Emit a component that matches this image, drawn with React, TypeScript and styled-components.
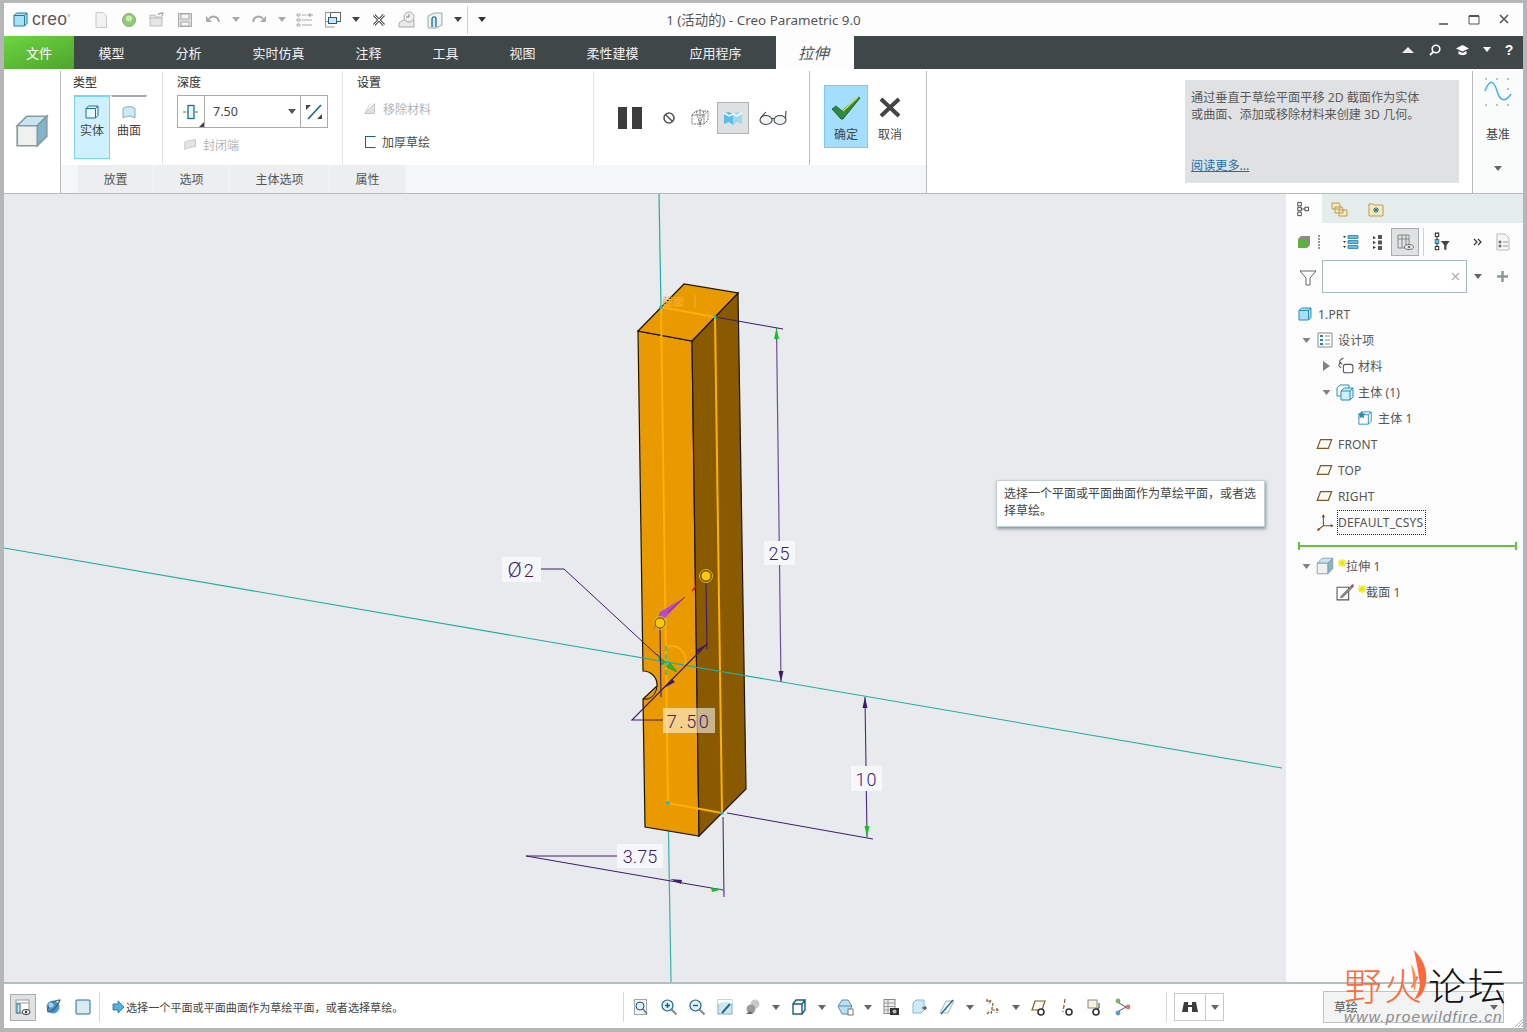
import React from 'react';
import styled, { createGlobalStyle } from 'styled-components';

const GlobalStyle = createGlobalStyle`
  html, body {
    margin: 0;
    padding: 0;
    background: #b4b6b7;
  }
  * {
    box-sizing: border-box;
  }
`;

const Frame = styled.div`
  width: 1527px;
  height: 1032px;
  padding: 3px 4px 4px;
  display: flex;
  flex-direction: column;
  overflow: hidden;
  position: relative;
  background: #b4b6b7;
  font-family: "Noto Sans", "Noto Sans CJK SC", sans-serif;
  font-size: 12px;
  color: #555;
`;

/* title bar */
const TitleBar = styled.div`
  height: 33px;
  flex: none;
  background: #fdfdfd;
  display: grid;
  grid-template-columns: 1fr auto 1fr;
  align-items: center;
`;

const TitleLeft = styled.div`
  display: flex;
  align-items: center;
  padding-left: 9px;
`;

const Brand = styled.span`
  font-family: "Liberation Sans", sans-serif;
  font-size: 17.5px;
  color: #5a5a5a;
  margin-left: 4px;
  width: 52px;
  letter-spacing: 0.3px;
`;

const BrandMark = styled.span`
  font-size: 8px;
  vertical-align: 5px;
`;

const IconRow = styled.div`
  display: flex;
  align-items: center;
  gap: 10px;
  margin-left: 8px;
`;

const QuickDivider = styled.div`
  width: 1px;
  height: 28px;
  background: #cfcfcf;
  margin: 0 -1px 0 -5px;
`;

const WindowTitle = styled.div`
  font-size: 13.4px;
  color: #555;
  padding-bottom: 2px;
`;

const WindowButtons = styled.div`
  display: flex;
  justify-content: flex-end;
  align-items: center;
  gap: 16px;
  padding-right: 12px;
`;

/* ribbon tabs */
const TabBar = styled.div`
  height: 33px;
  flex: none;
  background: #3f4749;
  display: flex;
  align-items: stretch;
`;

const FileTab = styled.div`
  width: 70px;
  margin-right: -1px;
  background: linear-gradient(160deg, #6cd640, #4fa32d);
  color: #fff;
  font-size: 13px;
  display: flex;
  align-items: center;
  justify-content: center;
`;

const Tab = styled.div`
  padding: 0 25.5px;
  color: #f2f2f2;
  font-size: 13px;
  display: flex;
  align-items: center;
`;

const ActiveTab = styled.div`
  width: 78px;
  margin-left: 9px;
  padding-right: 3px;
  background: #fdfdfd;
  color: #555;
  font-size: 15.5px;
  font-style: italic;
  display: flex;
  align-items: center;
  justify-content: center;
`;

const TabTools = styled.div`
  margin-left: auto;
  display: flex;
  align-items: center;
  gap: 13px;
  padding: 0 9px 6px 0;
`;

/* ribbon */
const Ribbon = styled.div`
  height: 125px;
  flex: none;
  background: #fff;
  border-bottom: 1px solid #b5babb;
  display: flex;
`;

const FeatureIcon = styled.div`
  width: 56px;
  display: flex;
  justify-content: center;
  padding: 43px 0 0 0;
`;

const RibbonBody = styled.div`
  width: 867px;
  margin-top: 2px;
  border-left: 1px solid #b9bcbe;
  border-right: 1px solid #b9bcbe;
  display: flex;
  flex-direction: column;
`;

const Groups = styled.div`
  height: 94px;
  display: flex;
`;

const Group = styled.div<{ $w: number; $pad: number; $strong?: boolean }>`
  width: ${(p) => p.$w}px;
  flex: none;
  padding: 4px 0 0 ${(p) => p.$pad}px;
  border-right: 1px solid ${(p) => (p.$strong ? '#b9bcbe' : '#e3e5e6')};
`;

const GroupTitle = styled.div<{ $ml?: number }>`
  height: 16px;
  line-height: 16px;
  font-weight: 500;
  color: #4a4a4a;
  margin-bottom: 4px;
  margin-left: ${(p) => p.$ml ?? 0}px;
`;

const TypeRow = styled.div`
  display: flex;
  gap: 1px;
`;

const TypeButton = styled.div<{ $on?: boolean }>`
  width: 36px;
  height: 64px;
  display: flex;
  flex-direction: column;
  align-items: center;
  padding-top: 8px;
  gap: 2px;
  background: ${(p) => (p.$on ? '#cff0fd' : 'transparent')};
  border: 1px solid ${(p) => (p.$on ? '#7cd3f8' : 'transparent')};
  border-top: 2px solid ${(p) => (p.$on ? '#7cd3f8' : '#a8a8a8')};
  color: #444;
`;

const DepthField = styled.div`
  width: 151px;
  height: 33px;
  border: 1px solid #aaa;
  display: flex;
  align-items: stretch;
`;

const DepthIcon = styled.div`
  width: 27px;
  position: relative;
  border-right: 1px solid #aaa;
  display: flex;
  align-items: center;
  justify-content: center;

  &::after {
    content: '';
    position: absolute;
    right: 0;
    bottom: 0;
    border-style: solid;
    border-width: 0 0 5px 5px;
    border-color: transparent transparent #444 transparent;
  }
`;

const DepthValue = styled.div`
  flex: 1;
  display: flex;
  align-items: center;
  justify-content: space-between;
  padding: 0 4px 0 8px;
  font-size: 12.5px;
  color: #444;
`;

const DepthFlip = styled.div`
  width: 27px;
  border-left: 1px solid #aaa;
  display: flex;
  align-items: center;
  justify-content: center;
`;

const DisabledOption = styled.div<{ $left: number; $top: number }>`
  display: flex;
  align-items: center;
  gap: 4px;
  color: #b4b4b4;
  margin: ${(p) => p.$top}px 0 0 ${(p) => p.$left}px;
`;

const ThickenRow = styled.div`
  display: flex;
  align-items: center;
  gap: 6px;
  color: #4a4a4a;
  margin: 15px 0 0 8px;
`;

const ThickenBox = styled.span`
  width: 11px;
  height: 12px;
  border: 1px solid #1d5f80;
  border-right-color: transparent;
`;

const ControlGroup = styled.div`
  width: 216px;
  flex: none;
  display: flex;
  align-items: center;
  padding-left: 24px;
  border-right: 1px solid #b9bcbe;
`;

const Control = styled.div<{ $ml: number }>`
  margin-left: ${(p) => p.$ml}px;
  display: flex;
`;

const ToggleControl = styled.div`
  width: 32px;
  height: 32px;
  margin-left: 7px;
  background: #dfe0e2;
  border: 1px solid #b0b0b0;
  display: flex;
  align-items: center;
  justify-content: center;
`;

const ConfirmGroup = styled.div`
  flex: 1;
  display: flex;
  padding: 14px 0 0 14px;
`;

const ConfirmButton = styled.div<{ $primary?: boolean }>`
  width: 44px;
  height: 63px;
  display: flex;
  flex-direction: column;
  align-items: center;
  padding-top: 10px;
  gap: 5px;
  color: #444;
  background: ${(p) => (p.$primary ? '#a3defd' : 'transparent')};
  border: 1px solid ${(p) => (p.$primary ? '#7cc9f6' : 'transparent')};
`;

const SubTabs = styled.div`
  height: 28px;
  background: #f5f6f8;
  display: flex;
  gap: 1px;
  padding-left: 17px;
`;

const SubTab = styled.div<{ $w: number }>`
  width: ${(p) => p.$w}px;
  background: #eceef0;
  color: #555;
  display: flex;
  align-items: center;
  justify-content: center;
`;

const HelpArea = styled.div`
  flex: 1;
  display: flex;
  justify-content: flex-end;
  padding: 11px 13px 0 0;
`;

const HelpBox = styled.div`
  width: 274px;
  height: 103px;
  background: #e0e1e3;
  padding: 9px 6px 9px 6px;
  font-size: 12.15px;
  line-height: 17px;
  color: #5a5a5a;
  display: flex;
  flex-direction: column;
  justify-content: space-between;
`;

const HelpLink = styled.span`
  color: #1b6fae;
  text-decoration: underline;
`;

const Datum = styled.div`
  width: 51px;
  flex: none;
  margin-top: 2px;
  background: #fafbfb;
  border-left: 1px solid #b9bcbe;
  display: flex;
  flex-direction: column;
  align-items: center;
  padding-top: 7px;
  color: #444;
`;

const DatumLabel = styled.div`
  margin: 17px 0 23px;
`;

/* main area */
const Main = styled.div`
  height: 788px;
  flex: none;
  display: flex;
`;

const Viewport = styled.div`
  width: 1282px;
  flex: none;
  position: relative;
  background: #e8eaed;
`;

const Scene = styled.svg`
  display: block;
`;

const Tooltip = styled.div`
  position: absolute;
  left: 992px;
  top: 286px;
  width: 269px;
  height: 47px;
  padding: 4px 7px;
  background: #fff;
  border: 1px solid #c3d0d4;
  box-shadow: 1px 2px 3px rgba(60, 80, 90, 0.55);
  font-size: 12px;
  line-height: 17px;
  white-space: nowrap;
  color: #444;
`;

const Panel = styled.div`
  flex: 1;
  background: #fcfcfc;
  display: flex;
  flex-direction: column;
`;

const PanelTabs = styled.div`
  height: 29px;
  flex: none;
  background: #e5ecec;
  display: flex;
`;

const PanelTab = styled.div<{ $on?: boolean }>`
  width: 36px;
  background: ${(p) => (p.$on ? '#fdfdfd' : 'transparent')};
  display: flex;
  align-items: center;
  justify-content: center;
`;

const PanelTools = styled.div`
  height: 28px;
  margin-top: 5px;
  padding-left: 8px;
  display: flex;
  flex: none;
`;

const PanelSlot = styled.div<{ $w: number; $on?: boolean }>`
  width: ${(p) => p.$w}px;
  flex: none;
  display: flex;
  align-items: center;
  justify-content: center;
  background: ${(p) => (p.$on ? '#dfe1e2' : 'transparent')};
  border: ${(p) => (p.$on ? '1px solid #a9adaf' : 'none')};
`;

const PanelDivider = styled.div`
  width: 1px;
  background: #ccd0d2;
  margin: 0 3px 0 4px;
`;

const SearchRow = styled.div`
  height: 31px;
  margin-top: 5px;
  flex: none;
  display: flex;
  align-items: center;
`;

const SearchFunnel = styled.div`
  width: 36px;
  display: flex;
  justify-content: center;
  padding-left: 8px;
`;

const SearchInput = styled.div`
  width: 145px;
  height: 33px;
  border: 1px solid #a9b8bc;
  background: #fff;
  display: flex;
  align-items: center;
  justify-content: flex-end;
  padding-right: 6px;
`;

const SearchTools = styled.div`
  display: flex;
  align-items: center;
  gap: 15px;
  margin-left: 7px;
`;

const Tree = styled.div`
  margin-top: 9px;
  display: flex;
  flex-direction: column;
  letter-spacing: 0.15px;
`;

const Row = styled.div<{ $pad: number }>`
  height: 26px;
  flex: none;
  padding-left: ${(p) => p.$pad}px;
  display: flex;
  align-items: center;
  color: #555;
`;

const Arrow = styled.span`
  width: 16px;
  flex: none;
  display: flex;
  justify-content: center;
`;

const RowIcon = styled.span`
  width: 22px;
  flex: none;
  margin-right: 2px;
  display: flex;
  justify-content: center;
`;

const Star = styled.span`
  display: flex;
  width: 8px;
  margin-bottom: 7px;
  flex: none;
`;

const RowLabel = styled.span<{ $focus?: boolean }>`
  outline: ${(p) => (p.$focus ? '1px dotted #222' : 'none')};
  line-height: ${(p) => (p.$focus ? '23px' : 'normal')};
  padding-right: ${(p) => (p.$focus ? '2px' : '0')};
`;

const InsertLine = styled.div`
  height: 2px;
  width: 219px;
  margin: 10px 0 6px 12px;
  flex: none;
  background: #66c23c;
  position: relative;

  &::before,
  &::after {
    content: '';
    position: absolute;
    top: -3px;
    width: 2px;
    height: 8px;
    background: #66c23c;
  }
  &::before {
    left: 0;
  }
  &::after {
    right: 0;
  }
`;

/* status bar */
const StatusBar = styled.div`
  height: 46px;
  flex: none;
  background: #fff;
  border-top: 2px solid #b3c0c0;
  display: flex;
  align-items: center;
  padding: 2px 0 0 6px;
`;

const StatusButton = styled.div<{ $on?: boolean; $w: number }>`
  width: ${(p) => p.$w}px;
  height: 27px;
  flex: none;
  display: flex;
  align-items: center;
  justify-content: center;
  background: ${(p) => (p.$on ? '#dfe1e2' : 'transparent')};
  border: ${(p) => (p.$on ? '1px solid #a9adaf' : 'none')};
`;

const StatusDivider = styled.div<{ $ml?: number }>`
  width: 1px;
  height: 30px;
  flex: none;
  margin-left: ${(p) => p.$ml ?? 0}px;
  background: #d4d8d9;
`;

const Message = styled.div`
  width: 523px;
  flex: none;
  display: flex;
  align-items: center;
  gap: 1px;
  padding-left: 12px;
  font-size: 11.1px;
  color: #444;
`;

const StatusTools = styled(IconRow)`
  margin-left: 8px;
  width: 534px;
  flex: none;
`;

const FindBox = styled.div`
  width: 50px;
  height: 28px;
  flex: none;
  margin-left: 7px;
  border: 1px solid #c5c9cb;
  display: flex;
  align-items: center;
`;

const FindIcon = styled.div`
  width: 31px;
  height: 100%;
  border-right: 1px solid #c5c9cb;
  display: flex;
  align-items: center;
  justify-content: center;
`;

const FindCaret = styled.div`
  flex: 1;
  display: flex;
  justify-content: center;
`;

const Selector = styled.div`
  width: 181px;
  height: 32px;
  flex: none;
  margin-left: 99px;
  background: #f2f3f3;
  border: 1px solid #bfc3c5;
  display: flex;
  align-items: center;
  justify-content: space-between;
  padding: 0 5px 0 10px;
`;

const Grip = styled.svg`
  flex: none;
  align-self: flex-end;
  margin: 0 0 1px 11px;
`;

const Watermark = styled.div`
  position: absolute;
  left: 1344px;
  top: 962px;
  width: 175px;
  pointer-events: none;
`;

const WatermarkTitle = styled.div`
  display: flex;
  font-size: 38px;
  line-height: 46px;
  font-weight: 300;
  letter-spacing: 2px;
  color: #111;
`;

const WatermarkHot = styled.span`
  color: #ff6a3c;
  width: 84px;
`;

const WatermarkUrl = styled.div`
  font-family: "Liberation Sans", sans-serif;
  font-style: italic;
  font-size: 15.5px;
  letter-spacing: 1.15px;
  color: #8a8a8a;
  white-space: nowrap;
`;

const Flame = styled.svg`
  position: absolute;
  left: 62px;
  top: -15px;
`;

const Caret = ({ color = '#666', w = 8 }: { color?: string; w?: number }) => (
  <svg width={w} height="5" viewBox="0 0 8 5">
    <path d="M0 0h8L4 5z" fill={color} />
  </svg>
);

const Ico = ({ s = 18, children }: { s?: number; children: React.ReactNode }) => (
  <svg width={s} height={s} viewBox="0 0 18 18" fill="none">
    {children}
  </svg>
);

const Cube = ({ s = 18, front = '#f0f0f0', side = '#7fb6cc', top = '#c4e6f3', line = '#8a9aa0' }: { s?: number; front?: string; side?: string; top?: string; line?: string }) => (
  <Ico s={s}>
    <path d="M2 6.5 6.5 2H16L11.5 6.5z" fill={top} stroke={line} strokeWidth=".8" />
    <path d="M11.5 6.5 16 2v9.5L11.5 16z" fill={side} stroke={line} strokeWidth=".8" />
    <path d="M2 6.5h9.5V16H2z" fill={front} stroke={line} strokeWidth=".8" />
  </Ico>
);

const PlaneIcon = () => (
  <Ico s={20}>
    <path d="M2 13 5 5h10l-3 8z" fill="#fbfaf3" stroke="#7a5c2c" strokeWidth="1.1" />
  </Ico>
);

const ToolIcons: Record<string, React.ReactNode> = {
  fit: (
    <Ico>
      <rect x="2.5" y="1.5" width="12" height="15" fill="#f3f6f7" stroke="#9aa" />
      <circle cx="8" cy="8" r="4" fill="#dff1fa" stroke="#346" />
      <path d="m11 11 4 5" stroke="#777" strokeWidth="1.6" />
    </Ico>
  ),
  zoomIn: (
    <Ico>
      <circle cx="7.5" cy="7.5" r="5.5" fill="#dff1fa" stroke="#17607f" strokeWidth="1.2" />
      <path d="M5 7.5h5M7.5 5v5" stroke="#17607f" strokeWidth="1.4" />
      <path d="m11.5 11.5 5 5" stroke="#888" strokeWidth="2" />
    </Ico>
  ),
  zoomOut: (
    <Ico>
      <circle cx="7.5" cy="7.5" r="5.5" fill="#dff1fa" stroke="#17607f" strokeWidth="1.2" />
      <path d="M5 7.5h5" stroke="#17607f" strokeWidth="1.4" />
      <path d="m11.5 11.5 5 5" stroke="#888" strokeWidth="2" />
    </Ico>
  ),
  repaint: (
    <Ico>
      <rect x="2" y="2" width="14" height="14" fill="#cfe6f0" stroke="#8ab" />
      <path d="M6 15 14 6" stroke="#1b6d92" strokeWidth="2" />
      <path d="M2 2h14v4C11 3 6 4 2 6z" fill="#fff" />
    </Ico>
  ),
  shade: (
    <Ico>
      <circle cx="11" cy="6" r="4.5" fill="#c9c9c9" />
      <circle cx="7" cy="11" r="4.5" fill="#9c9c9c" />
      <path d="M2 16h7l-3-3z" fill="#666" />
    </Ico>
  ),
  view: (
    <Ico>
      <path d="M3 6h9v10H3zM3 6l3-4h9l-3 4M12 16l3-4V2" fill="#fff" stroke="#17607f" strokeWidth="1.4" />
    </Ico>
  ),
  style: (
    <Ico>
      <path d="M2 8 6 2h6l4 6-4 8H6z" fill="#b9e0f2" stroke="#5b8fa8" />
      <path d="M2 8h14" stroke="#5b8fa8" />
      <rect x="12" y="11" width="5" height="6" fill="#fff" stroke="#777" />
    </Ico>
  ),
  table: (
    <Ico>
      <rect x="2" y="1.5" width="11" height="14" fill="#eee" stroke="#888" />
      <path d="M2 5h11M2 8.5h11M2 12h11M6 2v13" stroke="#999" />
      <rect x="8" y="10" width="9" height="7" fill="#333" />
      <circle cx="12.5" cy="13.5" r="2" fill="#bbb" />
    </Ico>
  ),
  pan: (
    <Ico>
      <path d="M3 5 6 2h8v10l-3 3H3z" fill="#cfeaf7" stroke="#7fb9d3" />
      <path d="M12 10h5M15 8v4" stroke="#333" />
    </Ico>
  ),
  section: (
    <Ico>
      <path d="M2 15 8 3h8l-6 12z" fill="#f4f4f4" stroke="#9bb" />
      <path d="M3 16 15 2" stroke="#1b6d92" strokeWidth="1.3" />
    </Ico>
  ),
  csys: (
    <Ico>
      <path d="M3 3h3M3 1v4M7 2 5 6M9 5l-2 11M8 12h8M13 10v5M3 16l3-3" stroke="#7a5c2c" strokeWidth="1.2" strokeDasharray="3 1" />
    </Ico>
  ),
  planeEye: (
    <Ico>
      <path d="M2 12 5 3h10l-3 9z" fill="#fbfaf3" stroke="#7a5c2c" strokeWidth="1.2" />
      <circle cx="11" cy="14" r="3" fill="#fff" stroke="#333" strokeWidth="1.6" />
    </Ico>
  ),
  axisEye: (
    <Ico>
      <path d="M7 1 5 14" stroke="#7a5c2c" strokeWidth="1.2" strokeDasharray="4 2" />
      <circle cx="11" cy="14" r="3" fill="#fff" stroke="#333" strokeWidth="1.6" />
    </Ico>
  ),
  noteEye: (
    <Ico>
      <rect x="2" y="2" width="9" height="8" fill="#f7f2dc" stroke="#888" />
      <path d="M13 5v5l-2 1" stroke="#333" />
      <circle cx="10" cy="14" r="3" fill="#fff" stroke="#333" strokeWidth="1.6" />
    </Ico>
  ),
  spin: (
    <Ico>
      <circle cx="4" cy="3" r="2.4" fill="#7cb56a" />
      <circle cx="14" cy="9" r="2.4" fill="#d67a7a" />
      <circle cx="4" cy="15" r="2.4" fill="#5b9bc4" />
      <path d="m5 5 7 4-7 4" stroke="#555" />
    </Ico>
  ),
};

const statusTools = ['fit', 'zoomIn', 'zoomOut', 'repaint', 'shade', '^', 'view', '^', 'style', '^', 'table', 'pan', 'section', '^', 'csys', '^', 'planeEye', 'axisEye', 'noteEye', 'spin'];

const quickTools: React.ReactNode[] = [
  <Ico key="new">
    <path d="M4 1.5h7l3.5 3.5v11.5H4z" fill="#f2f2f2" stroke="#c8c8c8" />
  </Ico>,
  <Ico key="ball">
    <circle cx="9" cy="9" r="6.5" fill="#8fce6a" stroke="#9a9a9a" />
    <circle cx="9" cy="7.5" r="3" fill="#c9efb3" />
  </Ico>,
  <Ico key="open">
    <path d="M2 7V4h5l1 2h6v2M2 15V7h12v8z" fill="#e5e5e5" stroke="#bbb" />
    <path d="M10 4c1-2 3-2 5-2l-1 3" stroke="#aaa" strokeWidth="1.3" />
  </Ico>,
  <Ico key="save">
    <path d="M2.5 2.5h13v13h-13z" fill="#ddd" stroke="#aaa" />
    <path d="M5 3h8v5H5zM5 11h8v4H5z" fill="#f5f5f5" stroke="#aaa" />
  </Ico>,
  <Ico key="undo">
    <path d="M5 8c3-4 9-3 10 3" stroke="#aaa" strokeWidth="2" />
    <path d="M2 5v6h6z" fill="#aaa" />
  </Ico>,
  <Caret key="c1" color="#aaa" />,
  <Ico key="redo">
    <path d="M13 8c-3-4-9-3-10 3" stroke="#aaa" strokeWidth="2" />
    <path d="M16 5v6h-6z" fill="#aaa" />
  </Ico>,
  <Caret key="c2" color="#aaa" />,
  <Ico key="regen">
    <path d="M1 3h3v2H1zM1 8h3v2H1zM1 13h3v2H1zM6 4h4M6 9h10M6 14h10" stroke="#aaa" />
    <path d="M11 4h6M14 2v4" stroke="#999" />
  </Ico>,
  <Ico key="windows">
    <rect x="1.5" y="1.5" width="10" height="9" fill="#fff" stroke="#999" />
    <rect x="6.5" y="1.5" width="10" height="9" fill="#fff" stroke="#666" />
    <rect x="4.5" y="6.5" width="8" height="6" fill="#c8e8f6" stroke="#17607f" />
    <path d="M1.5 10v6h9" stroke="#999" />
  </Ico>,
  <Caret key="c3" color="#444" />,
  <Ico key="close">
    <path d="m4 4 10 10M14 4 4 14" stroke="#555" strokeWidth="3" />
    <path d="m4 4 10 10M14 4 4 14" stroke="#fff" strokeWidth="1" />
  </Ico>,
  <Ico key="clock">
    <path d="M1 12 5 9h11v7H1z" fill="#e9e9e9" stroke="#aaa" />
    <circle cx="11" cy="6" r="5" fill="#f0f0f0" stroke="#aaa" />
    <path d="M11 3v3H8" stroke="#888" />
  </Ico>,
  <Ico key="part">
    <path d="M2 5 8 2h8v12l-6 3H2z" fill="#eef2f3" stroke="#9aa" />
    <path d="M6 16V8c0-3 4-3 4 0v8" fill="#cfeaf7" stroke="#17607f" strokeWidth="1.2" />
  </Ico>,
  <Caret key="c4" color="#444" />,
];

const Model = () => (
  <g>
    {/* body faces */}
    <path
      d="M638 331 643 671A14 14 0 0 1 657 686L643 699 645 827 699 836 692 341Z"
      fill="#e89a00"
      stroke="#1c1408"
      strokeWidth="1.2"
    />
    <path d="M692 341 738 293 746 789 699 836Z" fill="#8a5a00" stroke="#1c1408" strokeWidth="1.2" />
    <path d="M638 331 684 284 738 293 692 341Z" fill="#e89a00" stroke="#1c1408" strokeWidth="1.2" />
    <path d="M657 686Q656 696 648 699H643" fill="none" stroke="#1c1408" />
    {/* sketch section edges */}
    <path d="M661 307 715 317 722 813 668 803Z" fill="none" stroke="#ffb000" strokeWidth="2" />
    <text x="662" y="306" fontSize="11" fill="#f6b23a" fontFamily='"Noto Sans CJK SC", sans-serif'>
      截面
    </text>
    <path d="M695 295v13" stroke="#f3b040" />
    <path d="M666 647A14 14 0 0 1 677 673" stroke="#ffb000" strokeWidth="1.6" fill="none" />
  </g>
);

const Dimension = ({ x, y, w, h, label, bg = '#f6f7f9', spacing = 0 }: { x: number; y: number; w: number; h: number; label: React.ReactNode; bg?: string; spacing?: number }) => (
  <g>
    <rect x={x} y={y} width={w} height={h} fill={bg} />
    <text x={x + w / 2} y={y + h / 2 + 7} textAnchor="middle" fontSize="18" fontWeight="300" letterSpacing={spacing} fill="#3c1a6e" fontFamily='Roboto, sans-serif'>
      {label}
    </text>
  </g>
);

const Handle = ({ x, y }: { x: number; y: number }) => (
  <g>
    <circle cx={x} cy={y} r="6.5" fill="none" stroke="#d9b54a" />
    <circle cx={x} cy={y} r="5" fill="#ffc800" stroke="#5a4700" strokeWidth=".8" />
  </g>
);

const CadScene = () => (
  <Scene width="1282" height="788" viewBox="4 194 1282 788">
    <path d="M659 194 661 307" stroke="#1fae9f" strokeWidth="1.2" />
    <path d="M668 803 671 982" stroke="#35b5aa" strokeWidth="1.2" />
    <Model />
    <path d="M4 548 1282 768" stroke="#1fae9f" strokeWidth="1.1" fill="none" />

    {/* 25 */}
    <path d="M715 317 783 329" stroke="#3c1a6e" strokeWidth="1" />
    <path d="M776.5 328 781 682" stroke="#6d4f96" strokeWidth="1.2" />
    <path d="m776.5 328 2.5 11h-5z" fill="#12c22d" />
    <path d="m781 682-2.500-11h5z" fill="#3c1a6e" />

    {/* 10 */}
    <path d="M727 813 873 839" stroke="#3c1a6e" strokeWidth="1" />
    <path d="M865 697 867 837" stroke="#4a2a7c" strokeWidth="1.1" />
    <path d="m865 697 2.500 11h-5z" fill="#3c1a6e" />
    <path d="m867 837-2.500-11h5z" fill="#12c22d" />

    {/* 3.75 */}
    <path d="M617 856H526L723 890" stroke="#3c1a6e" strokeWidth="1" fill="none" />
    <path d="M723 817 724 897" stroke="#3c1a6e" strokeWidth="1" />
    <path d="m723 889-12-1 1 4z" fill="#12c22d" />
    <path d="m670 879 12 1-1 4z" fill="#3c1a6e" />

    {/* diameter */}
    <path d="M541 569H564L658 656" stroke="#3c1a6e" strokeWidth="1" fill="none" />
    <path d="m657 654 8 8-3 3z" fill="#12c22d" stroke="#0c7a1d" strokeWidth=".5" />
    <path d="m677 672-10-5 3-4z" fill="#12c22d" stroke="#0c7a1d" strokeWidth=".5" />
    <path d="M666 646V678" stroke="#1fae9f" strokeDasharray="5 3" strokeWidth="1.2" />
    <circle cx="666" cy="662" r="1.600" fill="#19b6d8" />

    {/* depth */}
    <path d="M660 628 661 697M706 582 707 649" stroke="#3c1a6e" strokeWidth="1.100" />
    <path d="M663 720H632L707 644" stroke="#3c1a6e" strokeWidth="1.100" fill="none" />
    <path d="m707 644-8 9-3-3zM664 688l8-9 3 3z" fill="#3c1a6e" />

    {/* pull arrow */}
    <path d="M685 597 666 617 653 630 660 612Z" fill="#b44ad0" />
    <path d="M697 585 692 591" stroke="#c2185b" strokeWidth="1.300" />
    <path d="M685 597 668 612" stroke="#a3178f" strokeWidth="1" />

    <Handle x={660} y={623} />
    <Handle x={706} y={576} />

    <circle cx="661" cy="307" r="1.800" fill="#19b6d8" />
    <circle cx="715" cy="317" r="1.800" fill="#19b6d8" />
    <circle cx="668" cy="803" r="1.800" fill="#19b6d8" />
    <circle cx="722" cy="813" r="1.800" fill="#19b6d8" />

    <Dimension x={764} y={541} w={31} h={24} label="25" spacing={1} />
    <Dimension x={851} y={766} w={31} h={25} label="10" spacing={1} />
    <Dimension x={617} y={844} w={46} h={24} label="3.75" />
    <Dimension
      x={502}
      y={557}
      w={39}
      h={25}
      spacing={2}
      label={
        <>
          <tspan fontSize="21">Ø</tspan>2
        </>
      }
    />
    <Dimension x={663} y={708} w={52} h={25} bg="rgba(255,255,255,.55)" spacing={2.5} label="7.50" />
  </Scene>
);

export default function App() {
  return (
    <>
      <GlobalStyle />
      <Frame>
        <TitleBar>
          <TitleLeft>
            <svg width="15" height="15" viewBox="0 0 15 15">
              <path d="M1 3.500 3.500 1H14v10.500L11.500 14H1z" fill="#a8e0f6" stroke="#1d7fa6" />
              <path d="M1 3.500h10.500V14M11.500 3.500 14 1" fill="none" stroke="#1d7fa6" />
            </svg>
            <Brand>
              creo<BrandMark>°</BrandMark>
            </Brand>
            <IconRow>
              {quickTools}
              <QuickDivider />
              <Caret color="#333" w={10} />
            </IconRow>
          </TitleLeft>
          <WindowTitle>1 (活动的) - Creo Parametric 9.0</WindowTitle>
          <WindowButtons>
            <svg width="14" height="14" viewBox="0 0 14 14">
              <path d="M2 11h9" stroke="#555" strokeWidth="1.600" />
            </svg>
            <svg width="14" height="14" viewBox="0 0 14 14">
              <path d="M2 3h10v8H2z" fill="none" stroke="#555" />
              <path d="M2 3h10" stroke="#555" strokeWidth="2" />
            </svg>
            <svg width="14" height="14" viewBox="0 0 14 14">
              <path d="m3 2 8 8M11 2l-8 8" stroke="#555" strokeWidth="1.600" />
            </svg>
          </WindowButtons>
        </TitleBar>

        <TabBar>
          <FileTab>文件</FileTab>
          {['模型', '分析', '实时仿真', '注释', '工具', '视图', '柔性建模', '应用程序'].map((t) => (
            <Tab key={t}>{t}</Tab>
          ))}
          <ActiveTab>拉伸</ActiveTab>
          <TabTools>
            <svg width="14" height="8" viewBox="0 0 14 8">
              <path d="M7 1 13 7H1z" fill="#eee" />
            </svg>
            <svg width="14" height="14" viewBox="0 0 14 14">
              <circle cx="8" cy="6" r="3.800" fill="none" stroke="#fff" strokeWidth="1.600" />
              <path d="M5 9 2 12" stroke="#fff" strokeWidth="2" />
            </svg>
            <svg width="15" height="14" viewBox="0 0 15 14">
              <path d="M7.500 2 14 5.500 7.500 8.500 1 5.500z" fill="#fff" />
              <path d="M3.500 8v3c2 1.500 6 1.500 8 0V8l-4 2z" fill="#fff" />
            </svg>
            <Caret color="#fff" />
            <svg width="10" height="14" viewBox="0 0 10 14">
              <text x="5" y="12" textAnchor="middle" fontSize="14" fontWeight="700" fill="#fff" fontFamily='"Liberation Sans", sans-serif'>
                ?
              </text>
            </svg>
          </TabTools>
        </TabBar>

        <Ribbon>
          <FeatureIcon>
            <Cube s={38} />
          </FeatureIcon>
          <RibbonBody>
            <Groups>
              <Group $w={102} $pad={13}>
                <GroupTitle $ml={-1}>类型</GroupTitle>
                <TypeRow>
                  <TypeButton $on>
                    <svg width="14" height="14" viewBox="0 0 14 14">
                      <path d="M1 3.500 3.500 1H13v9.500L10.500 13H1z" fill="#e8f7fd" stroke="#1d6f94" />
                      <path d="M1 3.500h9.500V13M10.500 3.500 13 1" fill="none" stroke="#1d6f94" />
                    </svg>
                    实体
                  </TypeButton>
                  <TypeButton>
                    <svg width="16" height="14" viewBox="0 0 16 14">
                      <path d="M2 13V4C2 1 14 1 14 4v9C10 10.500 6 10.500 2 13z" fill="#cfeaf7" stroke="#8ab" />
                    </svg>
                    曲面
                  </TypeButton>
                </TypeRow>
              </Group>
              <Group $w={180} $pad={14}>
                <GroupTitle>深度</GroupTitle>
                <DepthField>
                  <DepthIcon>
                    <svg width="18" height="18" viewBox="0 0 18 18">
                      <path d="M1 9h16" stroke="#7a5c2c" strokeDasharray="3 1" />
                      <rect x="6" y="2.500" width="6" height="13" fill="#e8f7fd" stroke="#1d6f94" strokeWidth="1.300" />
                    </svg>
                  </DepthIcon>
                  <DepthValue>
                    7.50
                    <Caret color="#555" />
                  </DepthValue>
                  <DepthFlip>
                    <svg width="20" height="20" viewBox="0 0 20 20">
                      <path d="M4 17 17 3" stroke="#1d6f94" strokeWidth="1.800" />
                      <path d="M2 3h5L2 8zM18 17h-5l5-5z" fill="#444" />
                    </svg>
                  </DepthFlip>
                </DepthField>
                <DisabledOption $left={6} $top={8}>
                  <Ico s={16}>
                    <path d="M2 6c2-2 10-3 12-3v8c-3 0-9 1-12 3z" fill="#e4e4e4" stroke="#c4c4c4" />
                  </Ico>
                  封闭端
                </DisabledOption>
              </Group>
              <Group $w={251} $pad={14}>
                <GroupTitle>设置</GroupTitle>
                <DisabledOption $left={6} $top={9}>
                  <Ico s={16}>
                    <path d="M2 14 13 3v11z" fill="#e2e2e2" stroke="#bbb" />
                    <path d="M2 14 8 3" stroke="#ccc" />
                  </Ico>
                  移除材料
                </DisabledOption>
                <ThickenRow>
                  <ThickenBox />
                  加厚草绘
                </ThickenRow>
              </Group>
              <ControlGroup>
                <Control $ml={0}>
                  <svg width="24" height="22" viewBox="0 0 24 22">
                    <path d="M0 0h9v22H0zM14 0h10v22H14z" fill="#3c3c3c" />
                  </svg>
                </Control>
                <Control $ml={20}>
                  <svg width="14" height="14" viewBox="0 0 14 14">
                    <circle cx="7" cy="7" r="5" fill="none" stroke="#555" strokeWidth="1.600" />
                    <path d="m3.500 3.500 7 7" stroke="#555" strokeWidth="1.600" />
                  </svg>
                </Control>
                <Control $ml={14}>
                  <svg width="20" height="20" viewBox="0 0 20 20" fill="none" stroke="#666" strokeWidth=".9">
                    <path d="M2 7 6 3h12l-4 4zM2 7v9h12V7M14 16l4-4V3M10 1v18M6 3l4 14M14 3l-4 14" strokeDasharray="2 .8" />
                  </svg>
                </Control>
                <ToggleControl>
                  <svg width="20" height="16" viewBox="0 0 20 16">
                    <path d="M1 3 6 2l4 2v11l-4-3-5 2z" fill="#5cbde8" />
                    <path d="m10 4 4-2 5 1v11l-5-2-4 3z" fill="#9fd8f0" />
                    <path d="M1 3 6 6l4-2 4 2 5-3" fill="none" stroke="#fff" strokeWidth="1.500" />
                  </svg>
                </ToggleControl>
                <Control $ml={10}>
                  <svg width="28" height="16" viewBox="0 0 28 16" fill="none" stroke="#444" strokeWidth="1.100">
                    <ellipse cx="7" cy="10" rx="6" ry="4.500" fill="#eef3f5" />
                    <ellipse cx="21" cy="10" rx="6" ry="4.500" fill="#eef3f5" />
                    <path d="M13 9c1-1 2-1 2 0M1.500 8 7 2M26.500 8l.5-7" />
                  </svg>
                </Control>
              </ControlGroup>
              <ConfirmGroup>
                <ConfirmButton $primary>
                  <svg width="30" height="24" viewBox="0 0 30 24">
                    <path d="M1 13 5 10l6 5L27 1l2 1-17 21h-2z" fill="#2f8b3c" stroke="#14532a" strokeWidth=".8" />
                    <path d="M12 15 27 1" stroke="#e9ea3a" strokeWidth="1.200" />
                  </svg>
                  确定
                </ConfirmButton>
                <ConfirmButton>
                  <svg width="22" height="24" viewBox="0 0 22 24">
                    <path d="m2 3 18 17M20 3 2 20" stroke="#444" strokeWidth="4" />
                  </svg>
                  取消
                </ConfirmButton>
              </ConfirmGroup>
            </Groups>
            <SubTabs>
              <SubTab $w={75}>放置</SubTab>
              <SubTab $w={75}>选项</SubTab>
              <SubTab $w={99}>主体选项</SubTab>
              <SubTab $w={75}>属性</SubTab>
            </SubTabs>
          </RibbonBody>
          <HelpArea>
            <HelpBox>
              <div>
                通过垂直于草绘平面平移 2D 截面作为实体
                <br />
                或曲面、添加或移除材料来创建 3D 几何。
              </div>
              <div>
                <HelpLink>阅读更多...</HelpLink>
              </div>
            </HelpBox>
          </HelpArea>
          <Datum>
            <svg width="30" height="30" viewBox="0 0 30 30" fill="none">
              <path d="M2 13C7 0 11 3 14 13s8 12 14 3" stroke="#3fb3e8" strokeWidth="1.500" />
              <path d="M3 1h.1M14 1h.1M25 1h.1M3 27h.1M14 27h.1M25 27h.1M25 11h.1" stroke="#777" strokeWidth="1.500" strokeLinecap="round" />
            </svg>
            <DatumLabel>基准</DatumLabel>
            <Caret color="#666" />
          </Datum>
        </Ribbon>

        <Main>
          <Viewport>
            <CadScene />
            <Tooltip>
              选择一个平面或平面曲面作为草绘平面，或者选
              <br />
              择草绘。
            </Tooltip>
          </Viewport>
          <Panel>
            <PanelTabs>
              <PanelTab $on>
                <Ico s={16}>
                  <path d="M2 1.500h4v4H2zM2 7h4v4H2zM2 12.500h4v4H2zM10 7h4v4h-4zM6 9h4" stroke="#333" />
                </Ico>
              </PanelTab>
              <PanelTab>
                <Ico>
                  <path d="M1 3h7l1 2h0v4H1zM4 7h7l1 2v4H4zM8 10h8v6H8z" fill="#f8e9b8" stroke="#b99a5a" />
                </Ico>
              </PanelTab>
              <PanelTab>
                <Ico>
                  <path d="M2 4h4l1 1h9v11H2z" fill="#f8e9b8" stroke="#b99a5a" />
                  <path d="M6 10h6M9 7v6M7 8l4 4M11 8l-4 4" stroke="#1d6f94" />
                </Ico>
              </PanelTab>
            </PanelTabs>
            <PanelTools>
              <PanelSlot $w={20}>
                <Ico s={18}>
                  <path d="M3 6 6 3h9v9l-3 3H3z" fill="#8a8a8a" />
                  <path d="M3 6h9v9H3z" fill="#5bb33a" />
                </Ico>
              </PanelSlot>
              <PanelSlot $w={10}>
                <svg width="2" height="14" viewBox="0 0 2 14">
                  <path d="M1 0v14" stroke="#999" strokeWidth="2" strokeDasharray="2 1" />
                </svg>
              </PanelSlot>
              <PanelSlot $w={14} />
              <PanelSlot $w={24}>
                <Ico>
                  <path d="M2 3h3L3.500 5zM2 8h3L3.500 10zM2 13h3l-1.500 2z" fill="#333" />
                  <path d="M7 2.500h10v3H7zM7 7.500h10v3H7zM7 12.500h10v3H7z" fill="#5cc0e8" stroke="#1d6f94" strokeWidth=".7" />
                </Ico>
              </PanelSlot>
              <PanelSlot $w={29}>
                <Ico>
                  <path d="M5 3 8 5 5 6zM5 8l3 1.500L5 11zM5 13l3 1.500L5 16z" fill="#333" />
                  <path d="M10 2h4v4h-4zM10 7.500h4v4h-4zM10 13h4v4h-4z" fill="#555" />
                </Ico>
              </PanelSlot>
              <PanelSlot $w={28} $on>
                <Ico>
                  <path d="M2 2h11v13H2zM2 6h11M6 2v13M10 2v13" stroke="#888" fill="none" />
                  <ellipse cx="13" cy="14" rx="4.500" ry="2.500" fill="#e8e8e8" stroke="#777" />
                  <circle cx="13" cy="14" r="1.300" fill="#777" />
                </Ico>
              </PanelSlot>
              <PanelDivider />
              <PanelSlot $w={30}>
                <Ico s={20}>
                  <path d="M3 1h3v3H3zM3 7h3v3H3zM3 13h3v3H3zM4.500 4v3M4.500 10v3" stroke="#333" />
                  <path d="M3 7h3v3H3z" fill="#5cc0e8" />
                  <path d="M8 8h8l-3 4v4h-2v-4z" fill="#444" />
                </Ico>
              </PanelSlot>
              <PanelSlot $w={42}>
                <svg width="10" height="8" viewBox="0 0 10 8" fill="none" stroke="#333" strokeWidth="1.200">
                  <path d="m1 1 3 3-3 3M5 1l3 3-3 3" />
                </svg>
              </PanelSlot>
              <PanelSlot $w={8}>
                <svg width="14" height="18" viewBox="0 0 14 18" style={{ flex: 'none' }}>
                  <path d="M1 1h8l4 4v12H1z" fill="#f5f5f5" stroke="#bbb" />
                  <path d="M3 8h2v2H3zM3 12h2v2H3zM7 9h5M7 13h5" stroke="#999" />
                </svg>
              </PanelSlot>
            </PanelTools>
            <SearchRow>
              <SearchFunnel>
                <Ico>
                  <path d="M1 3h16l-6 7v7H7v-7z" fill="#fff" stroke="#666" />
                </Ico>
              </SearchFunnel>
              <SearchInput>
                <svg width="9" height="9" viewBox="0 0 9 9">
                  <path d="m1 1 7 7M8 1 1 8" stroke="#aaa" strokeWidth="1.100" />
                </svg>
              </SearchInput>
              <SearchTools>
                <Caret color="#666" />
                <svg width="11" height="11" viewBox="0 0 11 11">
                  <path d="M5.500 0v11M0 5.500h11" stroke="#8f9698" strokeWidth="2.500" />
                </svg>
              </SearchTools>
            </SearchRow>
            <Tree>
              <Row $pad={8}>
                <RowIcon>
                  <svg width="14" height="14" viewBox="0 0 14 14">
                    <path d="M1 3.500 3.500 1H13v9.500L10.500 13H1z" fill="#a8e0f6" stroke="#2a8fb8" />
                    <path d="M1 3.500h9.500V13M10.500 3.500 13 1" fill="none" stroke="#2a8fb8" />
                  </svg>
                </RowIcon>
                1.PRT
              </Row>
              <Row $pad={12}>
                <Arrow>
                  <Caret color="#7d8486" w={9} />
                </Arrow>
                <RowIcon>
                  <Ico s={18}>
                    <path d="M2 2h14v14H2z" fill="#fff" stroke="#888" />
                    <path d="M4 4h3v2H4zM4 8h3v2H4zM4 12h3v2H4z" fill="#1f86b8" />
                    <path d="M9 5h5M9 9h5M9 13h5" stroke="#888" />
                  </Ico>
                </RowIcon>
                设计项
              </Row>
              <Row $pad={32}>
                <Arrow>
                  <svg width="7" height="10" viewBox="0 0 7 10">
                    <path d="m0 0 7 5-7 5z" fill="#7d8486" />
                  </svg>
                </Arrow>
                <RowIcon>
                  <Ico s={19}>
                    <path d="M7 1C3 3 2 5 6 7M5 5c-3 1-3 4 0 5" stroke="#555" fill="none" />
                    <rect x="7" y="7" width="9" height="8" rx="2" fill="#fff" stroke="#555" />
                  </Ico>
                </RowIcon>
                材料
              </Row>
              <Row $pad={32}>
                <Arrow>
                  <Caret color="#7d8486" w={9} />
                </Arrow>
                <RowIcon>
                  <Ico s={18}>
                    <path d="M1 5 4 2h9v8l-3 3H1z" fill="#fff" stroke="#2a8fb8" />
                    <path d="M5 8 8 5h9v9l-3 3H5z" fill="#cdeefb" stroke="#2a8fb8" />
                    <path d="M5 8h9v9M14 8l3-3" fill="none" stroke="#2a8fb8" />
                  </Ico>
                </RowIcon>
                主体 (1)
              </Row>
              <Row $pad={52}>
                <Arrow />
                <RowIcon>
                  <Ico s={17}>
                    <path d="M2 5h10v10H2zM2 5l3-3h10v10l-3 3M12 5l3-3" fill="#fff" stroke="#2a8fb8" />
                    <path d="m5 1 1.200 2.500L9 4 7 6l.5 3L5 7.500 2.500 9 3 6 1 4l2.800-.5z" fill="#2a8fb8" />
                  </Ico>
                </RowIcon>
                主体 1
              </Row>
              <Row $pad={12}>
                <Arrow />
                <RowIcon>
                  <PlaneIcon />
                </RowIcon>
                FRONT
              </Row>
              <Row $pad={12}>
                <Arrow />
                <RowIcon>
                  <PlaneIcon />
                </RowIcon>
                TOP
              </Row>
              <Row $pad={12}>
                <Arrow />
                <RowIcon>
                  <PlaneIcon />
                </RowIcon>
                RIGHT
              </Row>
              <Row $pad={12}>
                <Arrow />
                <RowIcon>
                  <Ico s={19}>
                    <path d="M7 2v10H16M7 12l-5 4" stroke="#6b4d22" fill="none" />
                    <path d="M5.500 4 7 1l1.500 3M14 10.500 16.500 12 14 13.500M2 14l-1 3 3-1" fill="#6b4d22" />
                  </Ico>
                </RowIcon>
                <RowLabel $focus>DEFAULT_CSYS</RowLabel>
              </Row>
              <InsertLine />
              <Row $pad={12}>
                <Arrow>
                  <Caret color="#7d8486" w={9} />
                </Arrow>
                <RowIcon>
                  <Cube s={20} />
                </RowIcon>
                <Star>
                  <svg width="8" height="8" viewBox="0 0 8 8">
                    <path d="M4 0v8M0 4h8M1 1l6 6M7 1 1 7" stroke="#e8e800" strokeWidth="1.300" />
                  </svg>
                </Star>
                <RowLabel>拉伸 1</RowLabel>
              </Row>
              <Row $pad={32}>
                <Arrow />
                <RowIcon>
                  <Ico s={19}>
                    <path d="M1 4h11v12H1z" fill="#fff" stroke="#555" />
                    <path d="m5 12 10-10 1.500 1.500-10 10L4 14z" fill="#888" stroke="#555" strokeWidth=".5" />
                    <path d="m14 3 2-2 1 1-2 2z" fill="#b33" />
                  </Ico>
                </RowIcon>
                <Star>
                  <svg width="8" height="8" viewBox="0 0 8 8">
                    <path d="M4 0v8M0 4h8M1 1l6 6M7 1 1 7" stroke="#e8e800" strokeWidth="1.300" />
                  </svg>
                </Star>
                <RowLabel>截面 1</RowLabel>
              </Row>
            </Tree>
          </Panel>
        </Main>

        <StatusBar>
          <StatusButton $on $w={26}>
            <Ico>
              <rect x="2" y="2" width="13" height="13" fill="#fff" stroke="#999" />
              <path d="M2 5h13" stroke="#999" />
              <rect x="3" y="6" width="3" height="9" fill="#cfeaf7" stroke="#1d6f94" />
              <ellipse cx="12" cy="14" rx="4" ry="2.500" fill="#fff" stroke="#333" />
              <circle cx="12" cy="14" r="1.200" fill="#333" />
            </Ico>
          </StatusButton>
          <StatusButton $w={34}>
            <Ico>
              <circle cx="9" cy="9" r="6.500" fill="#3f9bd8" />
              <path d="M4 14C2 9 9 2 16 2c-2 5-7 12-12 12z" fill="none" stroke="#555" strokeWidth="1.200" />
              <circle cx="7" cy="7" r="2.500" fill="#9ed4f2" />
            </Ico>
          </StatusButton>
          <StatusButton $w={26}>
            <Ico>
              <rect x="2" y="2" width="14" height="14" rx="1" fill="#dbe9f1" stroke="#1d6f94" />
            </Ico>
          </StatusButton>
          <StatusDivider $ml={3} />
          <Message>
            <svg width="13" height="14" viewBox="0 0 13 14">
              <path d="M1 4h5V1l6 6-6 6v-3H1z" fill="#4fb4e0" stroke="#1d6f94" strokeWidth=".8" />
            </svg>
            选择一个平面或平面曲面作为草绘平面，或者选择草绘。
          </Message>
          <StatusDivider />
          <StatusTools>
            {statusTools.map((t, i) =>
              t === '^' ? <Caret key={i} color="#666" /> : <React.Fragment key={i}>{ToolIcons[t]}</React.Fragment>,
            )}
          </StatusTools>
          <StatusDivider />
          <FindBox>
            <FindIcon>
              <Ico>
                <path d="M3 4h4v3h4V4h4l2 10h-6V9H7v5H1z" fill="#3c3c3c" />
              </Ico>
            </FindIcon>
            <FindCaret>
              <Caret color="#666" />
            </FindCaret>
          </FindBox>
          <Selector>
            草绘
            <Caret color="#666" />
          </Selector>
          <Grip width="8" height="8" viewBox="0 0 8 8">
            <path d="M0 8 8 0M3 8l5-5M6 8l2-2" stroke="#aaa" />
          </Grip>
        </StatusBar>

        <Watermark>
          <Flame width="24" height="56" viewBox="0 0 24 50">
            <path d="M8 0c10 10 16 24 10 40-2 5-6 8-10 10 5-8 7-14 5-22C12 20 10 10 8 0z" fill="#ff6a3c" />
            <path d="M5 14c5 8 7 17 3 28C7 32 7 22 5 14z" fill="#ff8a50" />
          </Flame>
          <WatermarkTitle>
            <WatermarkHot>野火</WatermarkHot>
            论坛
          </WatermarkTitle>
          <WatermarkUrl>www.proewildfire.cn</WatermarkUrl>
        </Watermark>
      </Frame>
    </>
  );
}
